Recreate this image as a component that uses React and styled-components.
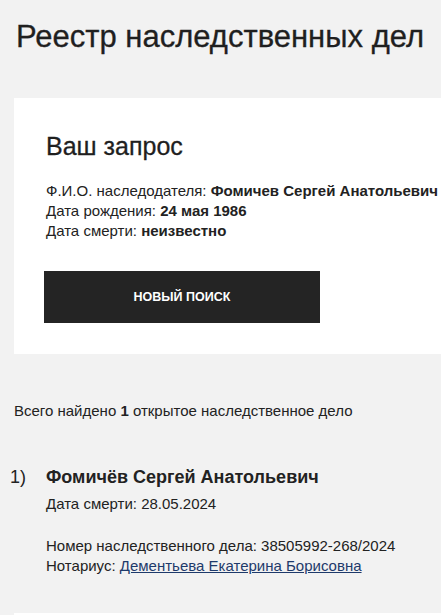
import React from 'react'
import styled, { createGlobalStyle } from 'styled-components'

const Global = createGlobalStyle`
  body {
    margin: 0;
    background: #f2f2f2;
    font-family: "Liberation Sans", Arial, sans-serif;
    color: #222;
    overflow: hidden;
  }
`

const Page = styled.div`
  width: 441px;
  height: 615px;
  overflow: hidden;
  padding-left: 14px;
  box-sizing: border-box;
`

const Title = styled.h1`
  margin: 0;
  padding: 19px 0 0 2px;
  font-size: 31px;
  font-weight: 400;
  line-height: 36px;
  white-space: nowrap;
  color: #1f1f1f;
  -webkit-text-stroke: 0.3px #1f1f1f;
`

const Card = styled.section`
  margin-top: 43px;
  background: #fff;
  padding: 33px 32px 31px 32px;
  width: 440px;
  box-sizing: border-box;
`

const CardTitle = styled.h2`
  margin: 0 0 20px 0;
  font-size: 25px;
  line-height: 30px;
  font-weight: 400;
  color: #1f1f1f;
  -webkit-text-stroke: 0.3px #1f1f1f;
`

const Line = styled.div`
  font-size: 15px;
  line-height: 20px;
  white-space: nowrap;
  color: #222;
  & b { font-weight: 700; }
`

const Button = styled.button`
  display: block;
  margin-top: 30px;
  margin-left: -2px;
  width: 276px;
  height: 52px;
  border: 0;
  background: #242424;
  color: #fff;
  font-family: inherit;
  font-size: 12.5px;
  font-weight: 700;
  text-transform: uppercase;
`

const Summary = styled.p`
  margin: 47px 0 0 0;
  font-size: 15px;
  line-height: 20px;
`

const Case = styled.div`
  margin-top: 44px;
  display: grid;
  grid-template-columns: 36px 1fr;
  margin-left: -4px;
`

const Num = styled.div`
  font-size: 18px;
  line-height: 24px;
`

const Name = styled.div`
  font-size: 18px;
  line-height: 24px;
  font-weight: 700;
`

const Block = styled.div`
  margin-top: ${p => p.gap}px;
`

const Link = styled.a`
  color: #1e3a6b;
  text-decoration: underline;
`

const Bottom = styled.div`
  margin-top: 37px;
  height: 40px;
  background: #fff;
`

export default function App () {
  return (
    <Page>
      <Global />
      <Title>Реестр наследственных дел</Title>
      <Card>
        <CardTitle>Ваш запрос</CardTitle>
        <Line>Ф.И.О. наследодателя: <b>Фомичев Сергей Анатольевич</b></Line>
        <Line>Дата рождения: <b>24 мая 1986</b></Line>
        <Line>Дата смерти: <b>неизвестно</b></Line>
        <Button>Новый поиск</Button>
      </Card>
      <Summary>Всего найдено <b>1</b> открытое наследственное дело</Summary>
      <Case>
        <Num>1)</Num>
        <div>
          <Name>Фомичёв Сергей Анатольевич</Name>
          <Block gap={5}>
            <Line>Дата смерти: 28.05.2024</Line>
          </Block>
          <Block gap={22}>
            <Line>Номер наследственного дела: 38505992-268/2024</Line>
            <Line>Нотариус: <Link href='#'>Дементьева Екатерина Борисовна</Link></Line>
          </Block>
        </div>
      </Case>
      <Bottom />
    </Page>
  )
}
